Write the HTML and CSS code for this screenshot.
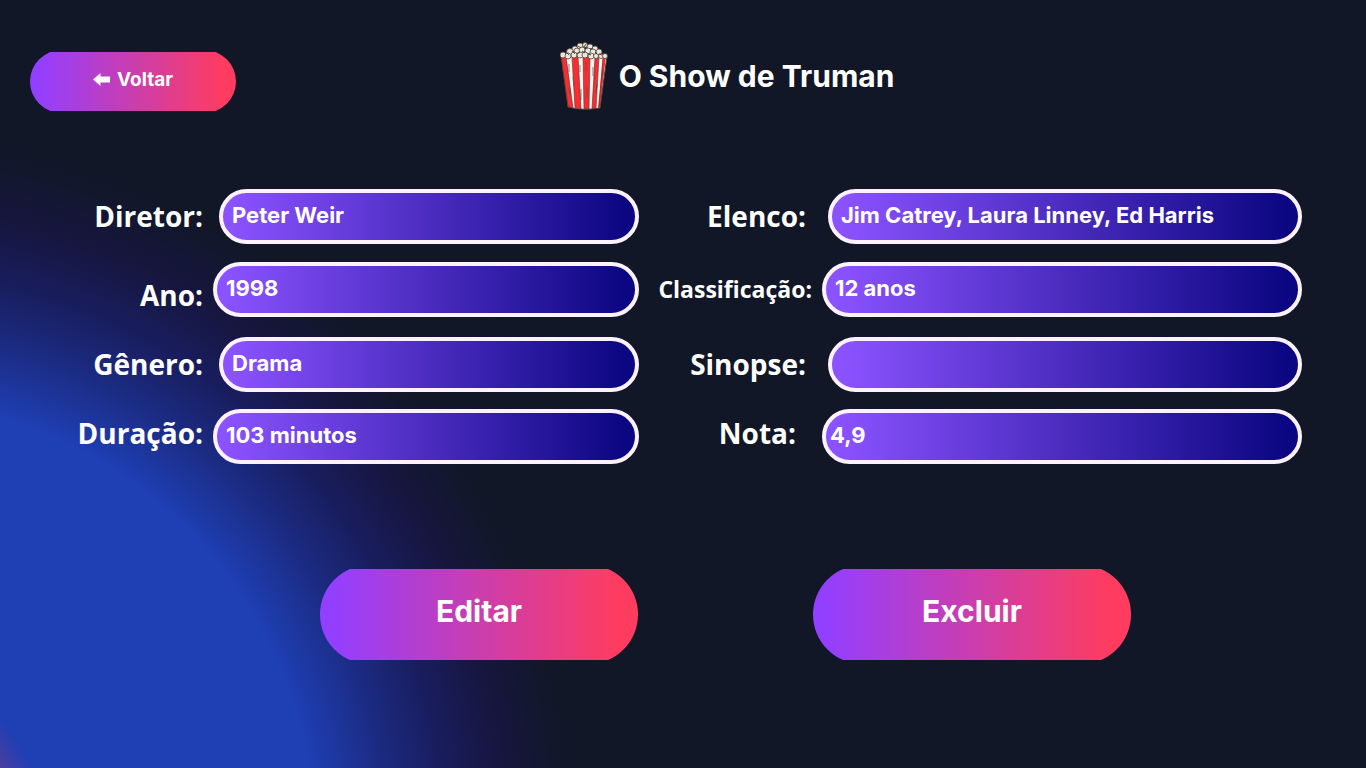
FILE: index.html
```html
<!DOCTYPE html>
<html lang="pt-BR">
<head>
<meta charset="utf-8">
<meta name="viewport" content="width=device-width, initial-scale=1">
<title>O Show de Truman</title>
<link rel="stylesheet" href="styles.css">
</head>
<body>
<header class="header">
  <button type="button" class="btn btn-back">
    <svg class="arrow" viewBox="0 0 17 13" aria-hidden="true"><path d="M0 6.500L7.500 0V3.500H17V9.500H7.500V13Z" fill="#fff"/></svg>
    Voltar
  </button>
  <div class="heading">
    <svg class="popcorn" viewBox="0 0 48 68" aria-hidden="true">
      <path d="M1 14 8 65Q22 69 40 66L47 14Z" fill="#f7f5ed"/>
      <path d="M1 14H6L13 66 8 65ZM12 14H18L21 67 15 66ZM23 14H30L29 67H24ZM35 14H39L36 66 32 67ZM43 14H46L40 65 38 66Z" fill="#fb2b30"/>
      <path d="M6 15 13 66M12 15 15 66M18 15 21 67M23 15 24 67M30 15 29 67M35 15 32 67M39 15 36 66M43 15 39 66" fill="none" stroke="#4a3430" stroke-width=".6"/>
      <path d="M1 14 8 65Q22 69 40 66L47 14" fill="none" stroke="#493d35" stroke-width="1"/>
      <path d="M9 22v8M13 35l1 9M26 20v9M27 45v12M33 25v9M21 47v11M37 42l-1 9M43 27l-1 8M9 46l1 6M20 23v7" fill="none" stroke="#594b43" stroke-width=".7"/>
      <g fill="#eee8dc" stroke="#50463f" stroke-width=".8">
        <circle cx="15" cy="7" r="3"/><circle cx="20" cy="4" r="3"/><circle cx="25" cy="3" r="2.500"/><circle cx="30" cy="5" r="3"/><circle cx="35" cy="7" r="3"/>
        <circle cx="10" cy="10" r="3.500"/><circle cx="17" cy="9" r="3"/><circle cx="22" cy="8" r="3"/><circle cx="28" cy="9" r="3"/><circle cx="33" cy="10" r="3"/><circle cx="39" cy="10" r="3"/>
        <circle cx="3" cy="13" r="3"/><circle cx="8" cy="14" r="3"/><circle cx="14" cy="13" r="3"/><circle cx="20" cy="13" r="3"/><circle cx="25" cy="13" r="3"/><circle cx="31" cy="14" r="3"/><circle cx="36" cy="14" r="2.500"/><circle cx="41" cy="14" r="2.500"/><circle cx="45" cy="14" r="2.500"/>
      </g>
      <path d="M18 4l3 2M26 2l-2 3M30 7l3-1M12 9l3 3M22 9l3 2M35 10l2 2M17 12l3-2M28 12l3 1M7 11l2 2M39 12l3 1" stroke="#3f3733" stroke-width=".9"/>
    </svg>
    <h1 class="title">O Show de Truman</h1>
  </div>
</header>
<main>
  <form class="details">
    <label class="label" for="diretor">Diretor:</label>
    <input class="field field-inset" id="diretor" value="Peter Weir" readonly>
    <label class="label label-wide" for="elenco">Elenco:</label>
    <input class="field field-inset" id="elenco" value="Jim Catrey, Laura Linney, Ed Harris" readonly>

    <label class="label label-low" for="ano">Ano:</label>
    <input class="field" id="ano" value="1998" readonly>
    <label class="label label-small" for="classificacao">Classificação:</label>
    <input class="field" id="classificacao" value="12 anos" readonly>

    <label class="label" for="genero">Gênero:</label>
    <input class="field field-inset" id="genero" value="Drama" readonly>
    <label class="label label-wide" for="sinopse">Sinopse:</label>
    <input class="field field-inset" id="sinopse" value="" readonly>

    <label class="label label-high" for="duracao">Duração:</label>
    <input class="field" id="duracao" value="103 minutos" readonly>
    <label class="label label-high label-wider" for="nota">Nota:</label>
    <input class="field field-tight" id="nota" value="4,9" readonly>
  </form>
  <div class="actions">
    <button type="button" class="btn btn-large">Editar</button>
    <button type="button" class="btn btn-large">Excluir</button>
  </div>
</main>
</body>
</html>
```

FILE: styles.css
```css
* {
  box-sizing: border-box;
}

body {
  margin: 0;
  min-height: 100vh;
  color: #fff;
  font-family: Inter, "Open Sans", sans-serif;
  background: #111727 radial-gradient(circle at -126px calc(100% + 72px), #8a3a7c 100px, #1f3fb5 175px, #1f3fb5 440px, #1b2a80 515px, #191d5e 570px, #16163f 630px, #111727 700px) no-repeat;
}

.header {
  display: flex;
  align-items: flex-start;
  padding: 42px 148px 0 30px;
}

.heading {
  flex: 1;
  display: flex;
  justify-content: center;
  align-items: center;
  gap: 11px;
}

.popcorn {
  width: 48px;
  height: 68px;
}

.title {
  margin: 0;
  font-size: 30px;
  line-height: 36px;
  font-weight: 700;
}

.btn {
  display: flex;
  justify-content: center;
  align-items: center;
  border: 0;
  color: #fff;
  font-family: inherit;
  font-weight: 700;
  background: linear-gradient(90deg, #933fff 4%, #ff3c60 94%);
  cursor: pointer;
}

.btn-back {
  gap: 7px;
  width: 206px;
  height: 63px;
  margin-top: 8px;
  padding: 0 0 5px;
  border-radius: 32px;
  clip-path: inset(2px 0);
  font-size: 19px;
}

.arrow {
  width: 17px;
  height: 13px;
}

.details {
  display: grid;
  grid-template-columns: 181px 426fr 183px 480fr;
  grid-template-rows: 73px 75px 72px 55px;
  align-items: start;
  padding: 76px 64px 0 32px;
}

.label {
  padding-right: 10px;
  text-align: right;
  font-family: "Open Sans", "Noto Sans", sans-serif;
  font-size: 28px;
  line-height: 54px;
  font-weight: 700;
}

.label-wide {
  padding-right: 16px;
}

.label-wider {
  padding-right: 26px;
}

.label-low {
  padding-top: 6px;
}

.label-high {
  line-height: 48px;
}

.label-small {
  font-size: 23px;
}

.field {
  min-width: 0;
  height: 55px;
  padding: 0 9px 4px;
  border: 4px solid #fcf1ff;
  border-radius: 28px;
  outline: 0;
  color: #fff;
  font-family: inherit;
  font-size: 22px;
  font-weight: 700;
  background: linear-gradient(90deg, #8b52ff 3%, #0b0681 97%) border-box;
}

.field-inset {
  margin-left: 6px;
}

.field-tight {
  padding-left: 4px;
}

.actions {
  display: flex;
  justify-content: center;
  gap: 175px;
  padding: 101px 0 40px 85px;
}

.btn-large {
  width: 318px;
  height: 99px;
  padding: 0 0 7px;
  border-radius: 50px;
  clip-path: inset(4px 0);
  font-size: 30px;
}
```
